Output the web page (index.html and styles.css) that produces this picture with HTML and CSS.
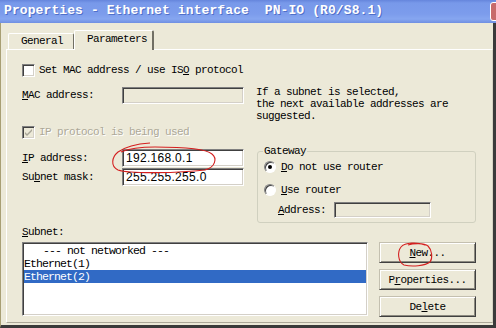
FILE: index.html
```html
<!DOCTYPE html>
<html>
<head>
<meta charset="utf-8">
<link rel="stylesheet" href="styles.css">
</head>
<body>
<div class="window">
  <div class="titlebar">
    <span class="title">Properties - Ethernet interface  PN-IO (R0/S8.1)</span>
    <span class="close"></span>
  </div>
  <div class="frame">
    <div class="tabs">
      <div class="tab">General</div>
      <div class="tab active">Parameters</div>
    </div>
    <div class="panel">
      <div class="check-row">
        <span class="checkbox"></span>
        <span>Set MAC address / use IS<u>O</u> protocol</span>
      </div>
      <div class="mac-row">
        <div class="field">
          <span class="label"><u>M</u>AC address:</span>
          <span class="input disabled"></span>
        </div>
        <div class="note">If a subnet is selected,<br>the next available addresses are<br>suggested.</div>
      </div>
      <div class="check-row disabled-row">
        <span class="checkbox checked">
          <svg width="9" height="9" viewBox="0 0 9 9"><path d="M1 4 L3 6 L8 1 L8 3 L3 8 L1 6 Z" fill="#a8a598"/></svg>
        </span>
        <span>IP protocol is being used</span>
      </div>
      <div class="ip-section">
        <div class="ip-fields">
          <div class="field">
            <span class="label"><u>I</u>P address:</span>
            <span class="input ip">192.168.0.1</span>
          </div>
          <div class="field">
            <span class="label">Su<u>b</u>net mask:</span>
            <span class="input ip">255.255.255.0</span>
          </div>
        </div>
        <fieldset class="gateway">
          <legend>Gateway</legend>
          <div class="radio-row first">
            <span class="radio on"><span class="dot"></span></span>
            <span><u>D</u>o not use router</span>
          </div>
          <div class="radio-row second">
            <span class="radio"></span>
            <span><u>U</u>se router</span>
          </div>
          <div class="address-row">
            <span class="addr-label"><u>A</u>ddress:</span>
            <span class="input disabled addr"></span>
          </div>
        </fieldset>
      </div>
      <div class="subnet-label"><u>S</u>ubnet:</div>
      <div class="subnet-row">
        <div class="listbox">
          <div class="item indent">--- not networked ---</div>
          <div class="item">Ethernet(1)</div>
          <div class="item selected">Ethernet(2)</div>
        </div>
        <div class="buttons">
          <div class="button"><span><u>N</u>ew...</span></div>
          <div class="button"><span>P<u>r</u>operties...</span></div>
          <div class="button"><span>De<u>l</u>ete</span></div>
        </div>
      </div>
    </div>
  </div>
  <svg class="annotations" width="496" height="328" viewBox="0 0 496 328">
    <path d="M150 143 C 135 144, 125 147, 118 152 C 112 157, 110 166, 118 170 C 130 174, 180 173, 205 170 C 216 167, 217 158, 212 154 C 205 148, 180 147, 155 147 C 140 147, 128 149, 121 152" fill="none" stroke="#d42020" stroke-width="1.1"/>
    <path d="M425 245 C 418 242, 405 242, 401 247 C 397 252, 398 262, 404 265 C 412 267, 425 266, 430 262 C 433 258, 432 250, 428 246 C 424 243, 414 243, 408 245" fill="none" stroke="#d42020" stroke-width="1.1"/>
  </svg>
</div>
</body>
</html>
```

FILE: styles.css
```css
* { box-sizing: border-box; }
body { margin: 0; }

.window {
  position: relative;
  width: 496px;
  height: 328px;
  overflow: hidden;
  display: flex;
  flex-direction: column;
  background: #ece9d8;
  font-family: "Liberation Mono", "DejaVu Sans Mono", monospace;
  font-size: 11px;
  letter-spacing: -0.6px;
  color: #000;
}

.titlebar {
  height: 23px;
  flex: none;
  display: flex;
  align-items: center;
  padding-left: 4px;
  background: linear-gradient(#6585dc 0px, #7899ea 3px, #7c9cec 14px, #86a6f0 19px, #6f8fe2 23px);
}
.title {
  color: #fff;
  font-weight: bold;
  font-size: 13px;
  letter-spacing: 0.1px;
  white-space: pre;
  text-shadow: 1px 1px 0 #4f6fc8;
  line-height: 14px;
  margin-top: -1px;
}
.close {
  margin-left: auto;
  margin-right: -15px;
  width: 21px;
  height: 19px;
  border: 1px solid #fff;
  border-radius: 3px;
  background: #c86a6a;
}

.frame {
  flex: 1;
  display: flex;
  flex-direction: column;
  padding: 7px 0 2px 5px;
  border-left: 1px solid #a89f74;
  border-right: 3px solid #3a3a3a;
  border-bottom: 3px solid #3a3a3a;
}

.tabs {
  display: flex;
  align-items: flex-end;
  height: 19px;
  padding-left: 2px;
}
.tab {
  height: 16px;
  width: 66px;
  padding-left: 12px;
  line-height: 15px;
  border-top: 1px solid #fff;
  border-left: 1px solid #fff;
  border-right: 1px solid #716f64;
  border-radius: 2px 2px 0 0;
  background: #ece9d8;
}
.tab.active {
  position: relative;
  z-index: 1;
  height: 20px;
  width: 80px;
  margin-bottom: -1px;
  padding-left: 12px;
  line-height: 16px;
  border-right: 2px solid #716f64;
}

.panel {
  flex: 1;
  border-top: 1px solid #fff;
  border-left: 1px solid #fff;
  border-right: 1px solid #d6d2c2;
  border-bottom: 1px solid #aca899;
  padding: 14px 0 0 15px;
}

.check-row {
  display: flex;
  align-items: center;
  height: 13px;
  line-height: 13px;
}
.checkbox {
  width: 13px;
  height: 13px;
  margin-right: 4px;
  background: #fff;
  border-top: 1px solid #808080;
  border-left: 1px solid #808080;
  border-right: 1px solid #fff;
  border-bottom: 1px solid #fff;
  box-shadow: inset 1px 1px 0 #404040, inset -1px -1px 0 #d4d0c8;
  display: flex;
  align-items: center;
  justify-content: center;
}
.checkbox.checked { background: #ece9d8; }
.disabled-row { margin-top: 4px; color: #aca899; text-shadow: 1px 1px 0 #fff; }

.mac-row {
  display: flex;
  margin-top: 9px;
}
.field {
  display: flex;
  align-items: center;
  width: 222px;
}
.mac-row .field { align-items: flex-start; padding-top: 1px; }
.mac-row .label { line-height: 17px; }
.label { width: 100px; }
.input {
  width: 122px;
  height: 18px;
  background: #fff;
  border-top: 1px solid #808080;
  border-left: 1px solid #808080;
  border-right: 1px solid #fff;
  border-bottom: 1px solid #fff;
  box-shadow: inset 1px 1px 0 #404040, inset -1px -1px 0 #d4d0c8;
  padding-left: 3px;
  line-height: 16px;
}
.input.disabled { background: #ece9d8; height: 17px; }
.input.ip {
  font-family: "Liberation Sans", Arial, sans-serif;
  font-size: 12px;
  letter-spacing: 0.3px;
}
.note {
  margin-left: 12px;
  line-height: 12px;
}

.ip-section {
  display: flex;
  margin-top: 6px;
}
.ip-fields {
  width: 222px;
  margin-top: 4px;
  display: flex;
  flex-direction: column;
  gap: 1px;
}
.ip-fields .label { line-height: 18px; }

.gateway {
  margin: 0 0 0 13px;
  width: 219px;
  padding: 0 6px 4px 6px;
  border: 1px solid #d0d0bf;
  border-radius: 3px;
}
.gateway legend {
  padding: 0 1px;
  line-height: 12px;
  margin-left: -1px;
}
.radio-row {
  display: flex;
  align-items: center;
  height: 12px;
  line-height: 12px;
}
.radio-row.first { margin-top: 4px; }
.radio-row.second { margin-top: 11px; }
.radio {
  width: 12px;
  height: 12px;
  border-radius: 50%;
  background: #fff;
  border: 1px solid;
  border-color: #808080 #fff #fff #808080;
  box-shadow: inset 1px 1px 0 #404040;
  margin-right: 5px;
  display: flex;
  align-items: center;
  justify-content: center;
}
.dot { width: 4px; height: 4px; border-radius: 50%; background: #000; }
.address-row {
  display: flex;
  align-items: center;
  margin-top: 6px;
  padding-left: 14px;
}
.addr-label { width: 56px; }
.input.addr { width: 97px; height: 16px; }

.subnet-label {
  margin-top: 3px;
  line-height: 12px;
}
.subnet-row {
  display: flex;
  margin-top: 4px;
}
.listbox {
  width: 346px;
  height: 74px;
  background: #fff;
  border-top: 1px solid #808080;
  border-left: 1px solid #808080;
  border-right: 1px solid #fff;
  border-bottom: 1px solid #fff;
  box-shadow: inset 1px 1px 0 #404040, inset -1px -1px 0 #d4d0c8;
  padding: 1px 1px;
}
.item {
  height: 13px;
  line-height: 13px;
  white-space: pre;
  font-size: 11.5px;
  letter-spacing: -0.9px;
}
.item.indent { padding-left: 19px; }
.item.selected { background: #316ac5; color: #fff; }

.buttons {
  margin-left: 11px;
  width: 97px;
  display: flex;
  flex-direction: column;
  gap: 6px;
}
.button {
  height: 21px;
  display: flex;
  align-items: center;
  justify-content: center;
  background: #ece9d8;
  border-top: 1px solid #c4c0b0;
  border-left: 1px solid #c4c0b0;
  border-right: 1px solid #404040;
  border-bottom: 1px solid #404040;
  box-shadow: inset 1px 1px 0 #fff, inset -1px -1px 0 #8c8a80;
  line-height: 12px;
}

.annotations {
  position: absolute;
  left: 0;
  top: 0;
  pointer-events: none;
}
```
